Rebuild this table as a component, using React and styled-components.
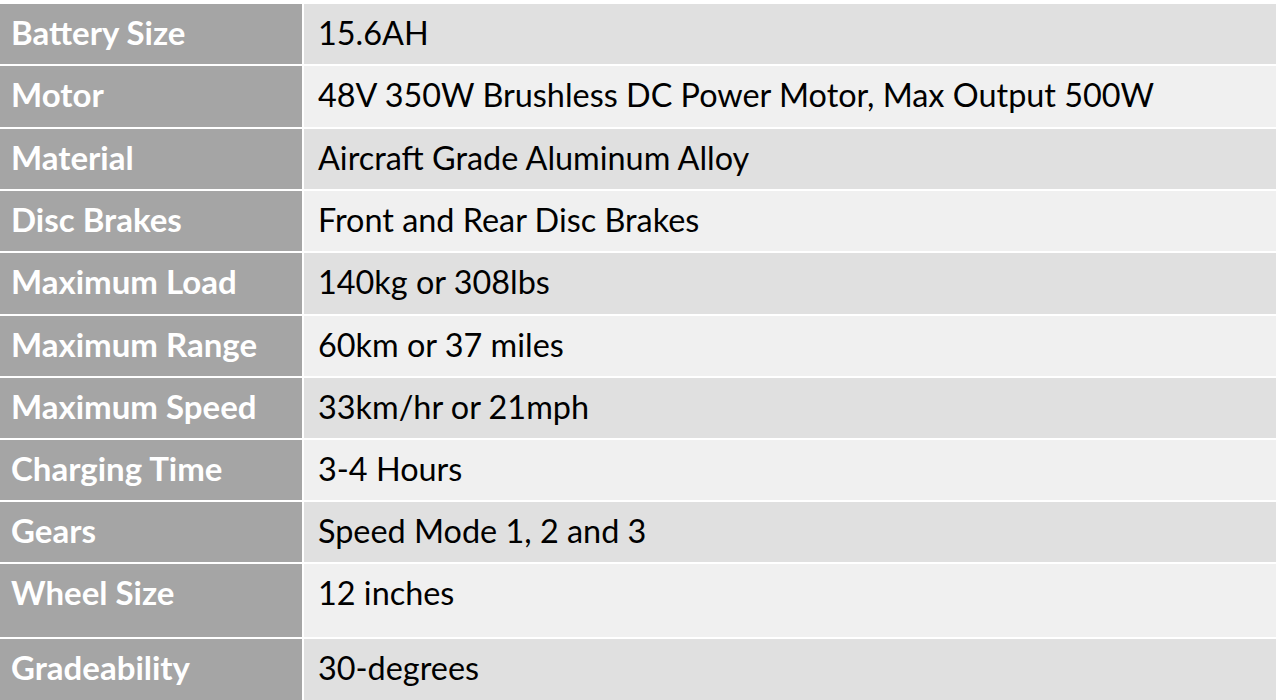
import React from "react";
import styled, { createGlobalStyle } from "styled-components";

const GlobalStyle = createGlobalStyle`
  body {
    margin: 0;
    background: #ffffff;
    font-family: Lato, "Liberation Sans", sans-serif;
  }
`;

const Table = styled.div`
  display: grid;
  grid-template-columns: 302px 1fr;
  column-gap: 2px;
  row-gap: 2px;
  padding-top: 4px;
  width: 1276px;
`;

const Label = styled.div`
  background-color: #a5a5a5;
  color: #ffffff;
  font-weight: 700;
  font-size: 33px;
  height: ${(p) => p.h}px;
  line-height: 57px;
  padding-left: 11px;
  white-space: nowrap;
`;

const Value = styled.div`
  background-color: ${(p) => (p.odd ? "#f0f0f0" : "#e0e0e0")};
  color: #000000;
  font-size: 32.4px;
  height: ${(p) => p.h}px;
  line-height: 58px;
  padding-left: 14px;
  white-space: nowrap;
`;

const specs = [
  ["Battery Size", "15.6AH"],
  ["Motor", "48V 350W Brushless DC Power Motor, Max Output 500W"],
  ["Material", "Aircraft Grade Aluminum Alloy"],
  ["Disc Brakes", "Front and Rear Disc Brakes"],
  ["Maximum Load", "140kg or 308lbs"],
  ["Maximum Range", "60km or 37 miles"],
  ["Maximum Speed", "33km/hr or 21mph"],
  ["Charging Time", "3-4 Hours"],
  ["Gears", "Speed Mode 1, 2 and 3"],
  ["Wheel Size", "12 inches"],
  ["Gradeability", "30-degrees"],
];

// the wheel size row is taller in the source sheet
const heights = [60, 61, 60, 60, 61, 60, 60, 60, 60, 73, 61];

export default function App() {
  return (
    <>
      <GlobalStyle />
      <Table>
        {specs.map(([label, value], i) => (
          <React.Fragment key={label}>
            <Label h={heights[i]}>{label}</Label>
            <Value h={heights[i]} odd={i % 2 === 1}>
              {value}
            </Value>
          </React.Fragment>
        ))}
      </Table>
    </>
  );
}
